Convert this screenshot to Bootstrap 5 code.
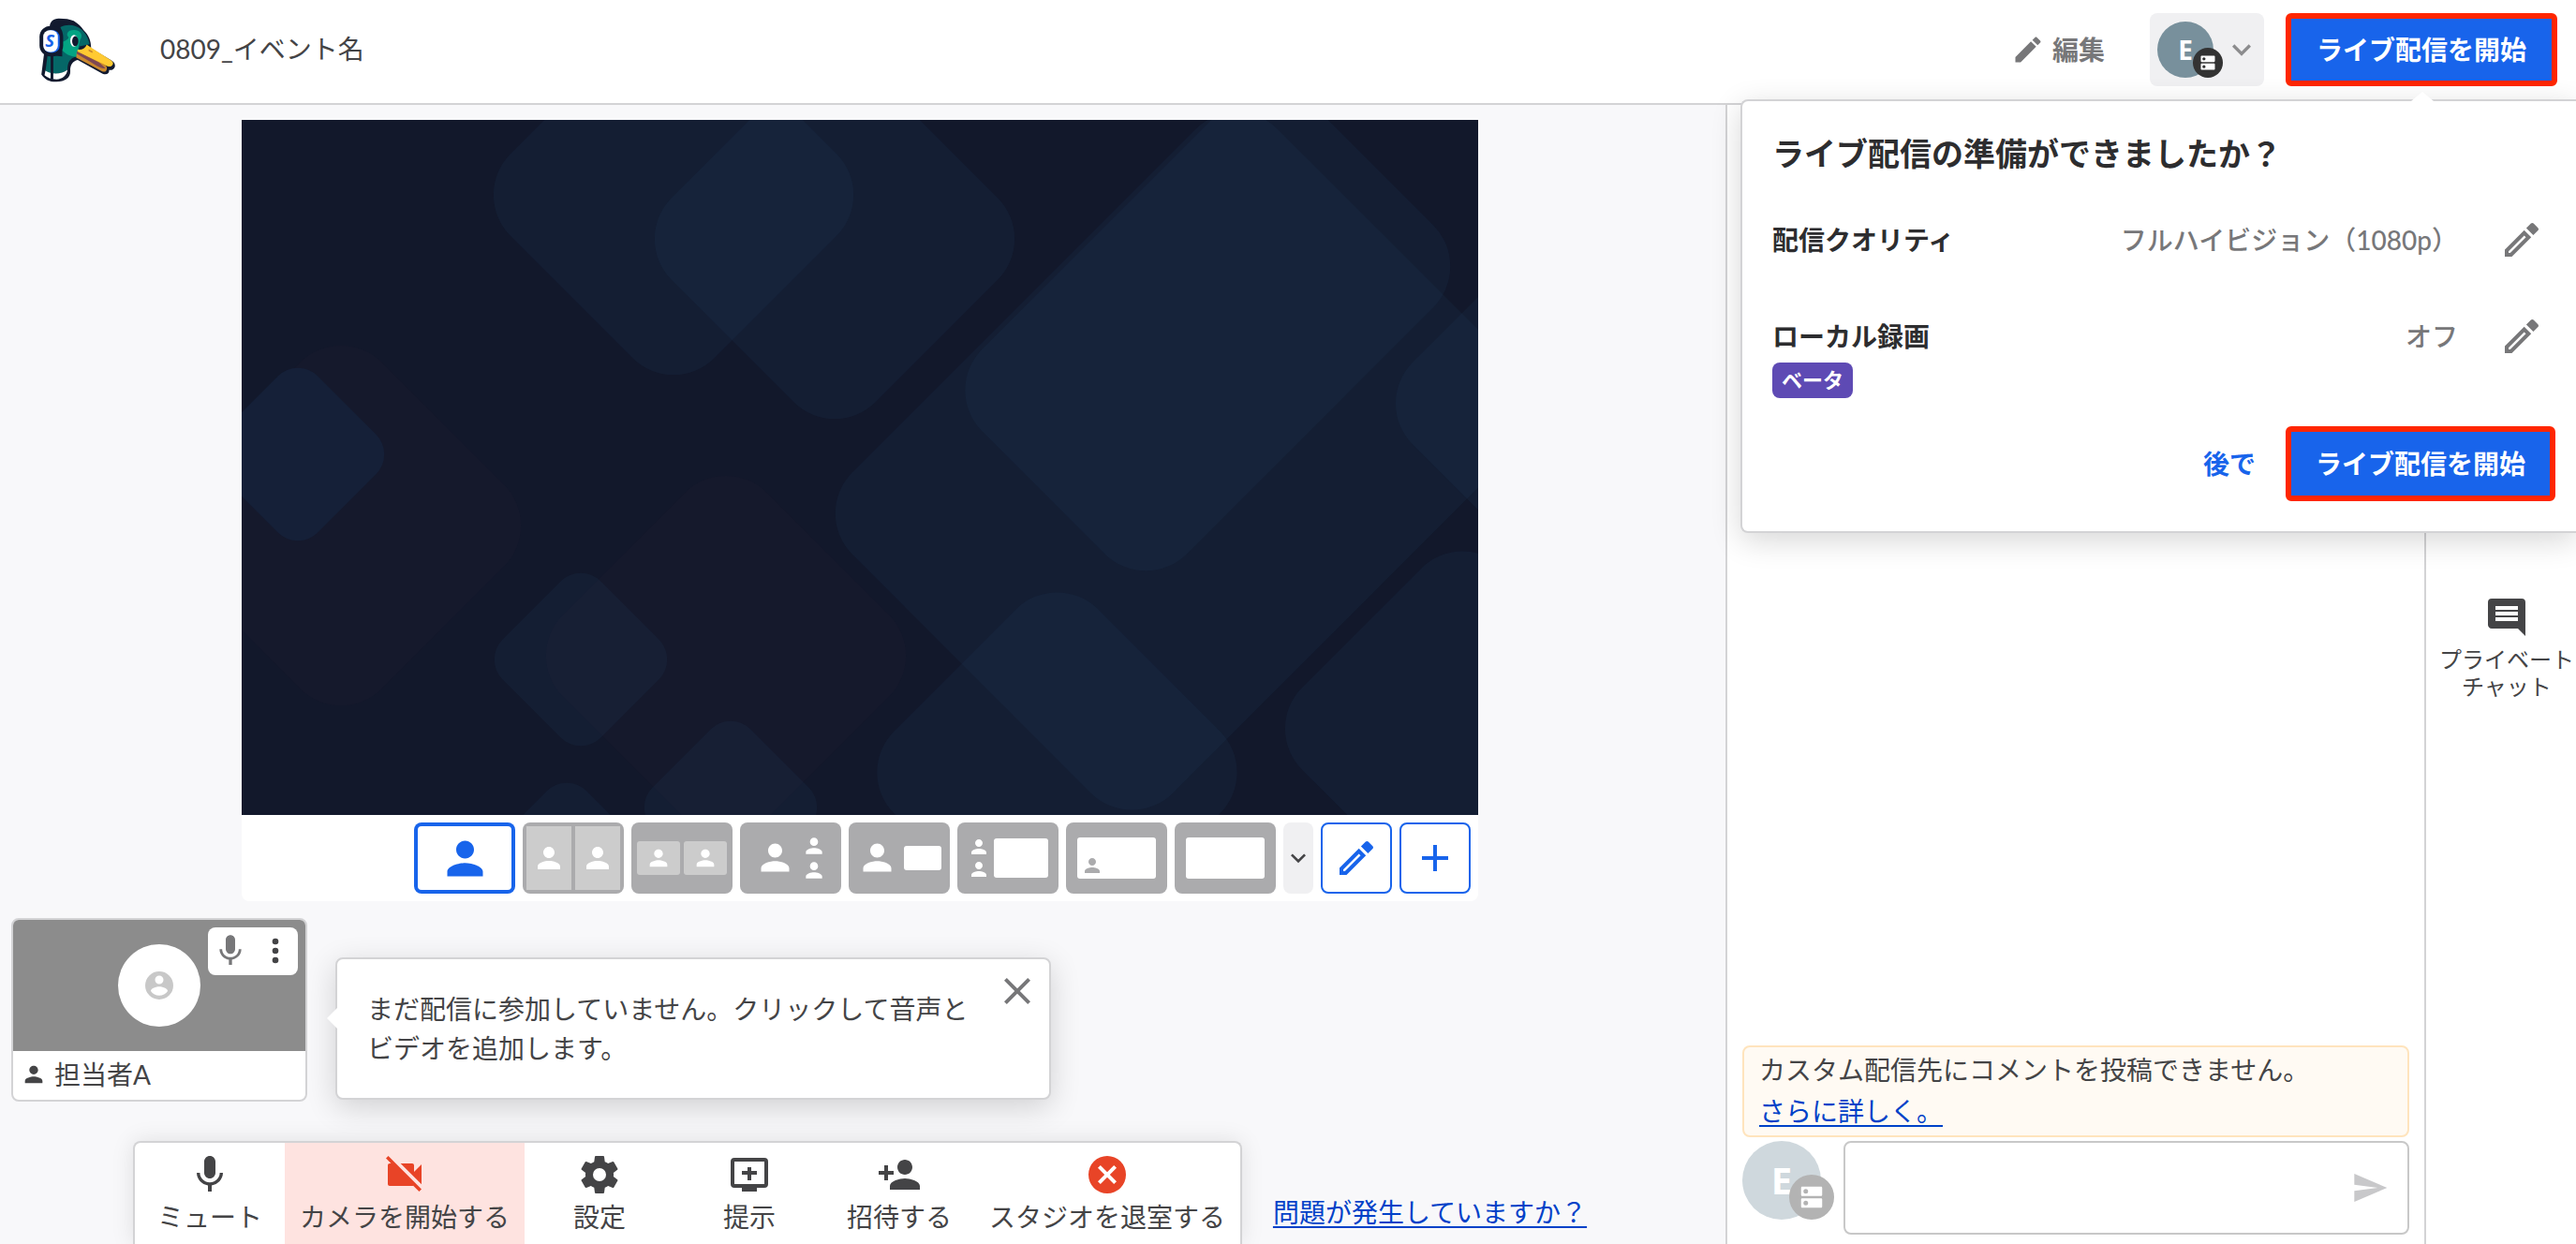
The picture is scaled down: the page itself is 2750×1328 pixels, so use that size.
<!DOCTYPE html>
<html lang="ja">
<head>
<meta charset="utf-8">
<meta name="viewport" content="width=device-width, initial-scale=1">
<title>0809_イベント名</title>
<link rel="stylesheet" href="https://cdn.jsdelivr.net/npm/bootstrap@5.3.0/dist/css/bootstrap.min.css">
<style>
:root{--ink:#444446;--muted:#777779;--blue:#1864eb;--line:#d3d3d5;--tile:#ababad}
body{font-family:Lato,"Noto Sans CJK JP",sans-serif;font-size:28px;line-height:42px;color:var(--ink);background:#f8f8fa}
svg{display:block;flex:none}
.i28{width:28px;height:28px}.i36{width:36px;height:36px}.i40{width:40px;height:40px}.i48{width:48px;height:48px}
.topbar{height:112px;border-bottom:2px solid var(--line);padding:0 20px 4px 42px;z-index:5}
.logo{width:82px;height:69px}
.event-name{margin-left:47px;font-size:28px;font-weight:400;line-height:42px;padding-bottom:3px}
.btn{font-size:28px;line-height:42px;font-weight:700;border-radius:8px}
.btn-plain{color:var(--muted);border:0}
.acct{background:#f0f0f2;border:0;height:78px;width:122px;padding:0 4px 0 8px;margin:0 23px 0 48px;gap:10px}
.avatar{flex:none;width:60px;height:60px;border-radius:50%;background:#78909c;color:#fff;font:700 28px/60px "Open Sans",sans-serif;text-align:center;position:relative}
.avatar .src{position:absolute;right:-10px;bottom:0;width:32px;height:32px;border-radius:50%;background:#333;display:flex;align-items:center;justify-content:center}
.avatar .src svg{width:20px;height:20px}
.avatar.big{width:84px;height:84px;background:#cfd8dd;font-size:40px;line-height:84px}
.avatar.big .src{right:-14px;width:48px;height:48px;background:#b3b3b3}
.avatar.big .src svg{width:30px;height:30px}
.btn-live{background:var(--blue);color:#fff;border:6px solid #ff2600;height:80px;padding:0 26px;border-radius:6px}
.btn-live:hover{background:#1256d0;color:#fff;border-color:#ff2600}
.topbar>.btn-live{height:78px;padding:0 27px}
.pop{position:absolute;top:106px;right:0;width:892px;background:#fff;border:2px solid var(--line);border-right:0;border-radius:8px 0 0 8px;padding:30px 22px 32px 32px;box-shadow:0 8px 32px rgba(0,0,0,.16);color:#2d2d2f}
.pop::before{content:"";position:absolute;right:152px;top:-10px;border:12px solid transparent;border-top:0;border-bottom:10px solid #fff}
.pop h2{font-size:34px;line-height:52px;font-weight:700;margin:0 0 42px}
.pop-row{height:48px;font-weight:700}
.pop-row~.pop-row{margin-top:55px}
.pop-row .btn{padding:0 12px;margin-left:32px}
.pop-value{color:var(--muted);font-weight:500}
.pop-actions{margin-top:30px}
.beta{background:#5e4ab4;color:#fff;font-size:22px;line-height:38px;font-weight:700;padding:0 10px;border-radius:8px}
.btn-later{color:var(--blue);padding:0;margin-right:32px;border:0}
.studio{padding:16px 6px 0 0}
.scene{max-width:1320px}
.scene>svg{width:100%;height:auto;aspect-ratio:1320/742}
.layouts{background:#fff;border-radius:0 0 8px 8px;padding:8px}
.layouts button{height:76px;border-radius:8px;border:0;padding:0;background:var(--tile);overflow:hidden;color:#fff;display:flex;align-items:center;justify-content:center}
.layouts .tile{width:108px}
.layouts .picked{background:#fff;color:var(--blue);box-shadow:inset 0 0 0 4px var(--blue)}
.layouts .more{width:32px;background:#f0f0f2;color:var(--ink)}
.layouts .tool{width:76px;background:#fff;color:var(--blue);border:2px solid var(--blue)}
.guests{padding:18px 12px 0}
.guest{width:316px;height:196px;background:#fff;border:2px solid var(--line);border-radius:8px;overflow:hidden}
.guest-view{height:140px;background:#8c8c8c}
.guest-face{width:88px;height:88px;background:#fff;color:#c8c8c8}
.guest-tools{position:absolute;top:8px;right:8px;background:#fff;border-radius:8px;padding:5px 4px 6px}
.guest-tools button,.hint button{border:0;background:none;padding:0}
.hint{width:764px;margin:42px 0 0 30px;background:#fff;border:2px solid var(--line);border-radius:8px;padding:32px 10px 32px 32px;box-shadow:0 8px 32px rgba(0,0,0,.16)}
.hint::before{content:"";position:absolute;left:-11px;top:52px;border:11px solid transparent;border-left:0;border-right-color:#fff}
.hint button{margin-top:-22px;color:var(--muted)}
.dock{height:110px;background:#fff;border:2px solid var(--line);border-bottom:0;border-radius:8px 8px 0 0;box-shadow:0 0 24px rgba(0,0,0,.10);overflow:hidden}
.dock button{border:0;background:none;color:var(--ink);min-width:160px;padding:10px 16px 0;white-space:nowrap}
.dock .off{background:#fee3e0}
.red{color:#e84427}
.text-link{color:#0041c8;text-decoration:underline;text-decoration-thickness:2px;text-underline-offset:4px}
.help{margin:0 0 13px 33px}
.chat{width:746px;background:#fff;border-left:2px solid var(--line);padding:0 16px 10px}
.notice{background:#fffaf3;border:2px solid #ffe4bd;border-radius:8px;padding:2px 16px 4px;line-height:44px;margin-bottom:4px}
.compose textarea{height:100px;border:2px solid #c8c8c8;border-radius:8px;resize:none;font-size:28px;background:#fff}
.compose .send{position:absolute;right:22px;top:30px;border:0;background:none;padding:0;color:#c8c8ca}
.rail{width:162px;background:#fff;border-left:2px solid var(--line);padding:523px 0 0 12px}
.rail a{font-size:24px;line-height:29px;color:var(--ink);white-space:nowrap}
.rail span{margin-top:6px}
</style>
<script src="https://cdn.jsdelivr.net/npm/bootstrap@5.3.0/dist/js/bootstrap.bundle.min.js"></script>
</head>
<body class="vh-100 overflow-hidden d-flex flex-column">
<svg class="d-none" fill="currentColor">
  <symbol id="person" viewBox="0 0 24 24"><path d="M12 12c2.2 0 4-1.8 4-4s-1.800-4-4-4-4 1.800-4 4 1.800 4 4 4zm0 2c-2.700 0-8 1.300-8 4v2h16v-2c0-2.700-5.300-4-8-4z"/></symbol>
  <symbol id="pencil" viewBox="0 0 24 24"><path d="M3 17.250V21h3.750L17.800 9.900l-3.750-3.750zM20.700 7.050c.4-.4.4-1 0-1.400l-2.350-2.350c-.4-.4-1-.4-1.400 0l-1.850 1.850 3.750 3.750z"/></symbol>
  <symbol id="pencil-line" viewBox="0 0 24 24"><path fill-rule="evenodd" d="M3 17.250V21h3.750L17.100 10.650 13.350 6.900zM5 18.100l8.350-8.350.9.900L5.900 19H5zM14.450 5.800l2.500-2.500c.4-.4 1-.4 1.400 0l2.350 2.350c.4.400.4 1 0 1.400l-2.500 2.500z"/></symbol>
  <symbol id="chev" viewBox="0 0 24 24"><path d="M7.400 8.600 12 13.200l4.600-4.600L18 10l-6 6-6-6z"/></symbol>
  <symbol id="server" viewBox="0 0 24 24"><path fill-rule="evenodd" d="M20 13H4c-.6 0-1 .4-1 1v6c0 .6.400 1 1 1h16c.6 0 1-.4 1-1v-6c0-.6-.4-1-1-1zM7 19a2 2 0 1 1 0-4 2 2 0 0 1 0 4zM20 3H4c-.6 0-1 .4-1 1v6c0 .6.400 1 1 1h16c.6 0 1-.4 1-1V4c0-.6-.4-1-1-1zM7 9a2 2 0 1 1 0-4 2 2 0 0 1 0 4z"/></symbol>
  <symbol id="mic" viewBox="0 0 24 24"><path d="M12 14c1.660 0 3-1.340 3-3V5c0-1.660-1.340-3-3-3S9 3.340 9 5v6c0 1.660 1.340 3 3 3zM17.300 11c0 3-2.540 5.100-5.300 5.100S6.700 14 6.700 11H5c0 3.410 2.720 6.230 6 6.720V21h2v-3.280c3.280-.48 6-3.300 6-6.720z"/></symbol>
  <symbol id="dots" viewBox="0 0 24 24"><circle cx="12" cy="6" r="2"/><circle cx="12" cy="12" r="2"/><circle cx="12" cy="18" r="2"/></symbol>
  <symbol id="face" viewBox="0 0 24 24"><path d="M12 2a10 10 0 1 0 0 20 10 10 0 0 0 0-20zm0 3a3 3 0 1 1 0 6 3 3 0 0 1 0-6zm0 14.200a7.200 7.200 0 0 1-6-3.220c.03-2 4-3.080 6-3.080s5.970 1.090 6 3.080a7.200 7.200 0 0 1-6 3.220z"/></symbol>
  <symbol id="close" viewBox="0 0 24 24"><path d="M19 6.400 17.600 5 12 10.600 6.400 5 5 6.400l5.600 5.600L5 17.600 6.400 19l5.600-5.600 5.600 5.600 1.400-1.400-5.600-5.600z"/></symbol>
  <symbol id="plus" viewBox="0 0 24 24"><path d="M19 13h-6v6h-2v-6H5v-2h6V5h2v6h6z"/></symbol>
  <symbol id="cam-off" viewBox="0 0 24 24"><path d="M21 6.500l-4 4V7c0-.55-.45-1-1-1H9.820L21 17.180zM3.270 2 2 3.270 4.730 6H4c-.55 0-1 .45-1 1v10c0 .55.450 1 1 1h12c.21 0 .39-.08.54-.18L19.730 21 21 19.730z"/></symbol>
  <symbol id="gear" viewBox="0 0 24 24"><path d="M19.430 12.980c.04-.32.070-.64.070-.98s-.03-.66-.07-.98l2.110-1.650c.19-.15.240-.42.120-.64l-2-3.460c-.12-.22-.39-.3-.61-.22l-2.490 1c-.52-.4-1.080-.73-1.690-.98l-.38-2.650A.49.490 0 0 0 14 2h-4c-.25 0-.46.180-.49.420l-.38 2.650c-.61.250-1.170.59-1.690.98l-2.490-1c-.23-.09-.49 0-.61.220l-2 3.460c-.13.220-.07.490.12.640l2.110 1.650c-.04.320-.07.650-.07.980s.03.660.07.980l-2.110 1.650c-.19.150-.24.420-.12.640l2 3.460c.12.220.39.300.61.220l2.490-1c.52.400 1.080.730 1.690.980l.38 2.650c.03.240.24.420.49.420h4c.25 0 .46-.18.490-.42l.38-2.650c.61-.25 1.170-.59 1.690-.98l2.490 1c.23.090.49 0 .61-.22l2-3.460c.12-.22.070-.49-.12-.64zM12 15.500a3.500 3.500 0 1 1 0-7 3.500 3.500 0 0 1 0 7z"/></symbol>
  <symbol id="present" viewBox="0 0 24 24"><path fill-rule="evenodd" d="M20 3H4a2 2 0 0 0-2 2v12a2 2 0 0 0 2 2h4v2h8v-2h4a2 2 0 0 0 2-2V5a2 2 0 0 0-2-2zm0 14H4V5h16zM11 8h2v2h3v2h-3v3h-2v-3H8v-2h3z"/></symbol>
  <symbol id="invite" viewBox="0 0 24 24"><path d="M15 12c2.210 0 4-1.790 4-4s-1.790-4-4-4-4 1.790-4 4 1.790 4 4 4zm-9-2V7H4v3H1v2h3v3h2v-3h3v-2zm9 4c-2.670 0-8 1.340-8 4v2h16v-2c0-2.660-5.330-4-8-4z"/></symbol>
  <symbol id="leave" viewBox="0 0 24 24"><path d="M12 2a10 10 0 1 0 0 20 10 10 0 0 0 0-20zm5 13.590L15.590 17 12 13.410 8.410 17 7 15.590 10.590 12 7 8.410 8.410 7 12 10.590 15.590 7 17 8.410 13.410 12z"/></symbol>
  <symbol id="send" viewBox="0 0 24 24"><path d="M2 21 23 12 2 3v7l15 2-15 2z"/></symbol>
  <symbol id="comment" viewBox="0 0 24 24"><path d="M22 4a2 2 0 0 0-2-2H4a2 2 0 0 0-2 2v12c0 1.100.9 2 2 2h14l4 4zM18 14H6v-2h12zm0-3H6V9h12zm0-3H6V6h12z"/></symbol>
</svg>

<header class="topbar bg-white d-flex align-items-center position-relative flex-shrink-0">
  <a href="#" aria-label="ホーム">
    <svg class="logo" viewBox="126 58 246 208">
      <path d="M141 170 132 240C142 256 160 265 181 264c26-1 45-12 44-34-1-20 8-32 24-36l80 44c14 5 22-2 21-12 12 2 22-7 18-19-2-6-6-9-13-13l-63-38c0-24-8-43-24-58-8-11-16-20-32-30-12-6-28-8-48-8-18 0-30 12-29 27z" fill="#121a2f"/>
      <path d="M152 178 145 230c18 12 54 10 71-5 0-20 6-32 18-38l14-7 7-30 32-7c-3-18-13-36-26-47-18-16-46-20-68-8l6 14v80z" fill="#056767"/>
      <path d="M201 135c9-4 17-8 19-14-11-9-4-26 20-24 20 2 26 18 17 31l-9 38-3 18c-19-1-39-11-46-23z" fill="#03a483"/>
      <path d="M145 228c20 13 52 12 71-3-3 19-15 29-36 31-16 0-29-5-38-13z" fill="#fff"/>
      <path d="M166 174v82" stroke="#121a2f" stroke-width="9"/>
      <path d="M249 160c10 3 24-2 29-15l75 48c10 7 12 11 7 18-3 4-8 5-15 3l-99-40z" fill="#ffca32"/>
      <path d="M246 166l88 42c7 5 11 10 8 17-3 8-9 8-17 4l-81-43z" fill="#ca882d"/>
      <path d="M246 166l72 36 21 19c-20 0-36-13-52-23l-41-24z" fill="#7e4853"/>
      <path d="M284 159l13 7-1 5-12-6z" fill="#ca882d"/>
      <ellipse cx="237" cy="132" rx="12" ry="19" fill="#fff"/><ellipse cx="241" cy="133" rx="10" ry="16" fill="#121a2f"/>
      <rect x="126" y="84" width="76" height="98" rx="35" fill="#121a2f"/>
      <rect x="139" y="98" width="52" height="72" rx="22" fill="#1864eb"/>
      <rect x="138" y="98" width="47" height="70" rx="21" fill="#fff"/>
      <text x="144" y="152" font-family="Open Sans, sans-serif" font-weight="700" font-style="italic" font-size="56" fill="#1864eb">S</text>
    </svg>
  </a>
  <h1 class="event-name mb-0 me-auto">0809_イベント名</h1>
  <button class="btn btn-plain d-flex align-items-center p-0"><svg class="i36 me-2" fill="currentColor"><use href="#pencil"/></svg>編集</button>
  <button class="btn acct d-flex align-items-center" aria-label="配信先">
    <span class="avatar">E<span class="src"><svg fill="#fff"><use href="#server"/></svg></span></span>
    <svg class="i40" fill="#8c8c8e"><use href="#chev"/></svg>
  </button>
  <button class="btn btn-live">ライブ配信を開始</button>

  <section class="pop">
    <h2>ライブ配信の準備ができましたか？</h2>
    <div class="pop-row d-flex align-items-center"><span class="me-auto">配信クオリティ</span><span class="pop-value">フルハイビジョン（1080p）</span><button class="btn btn-plain" aria-label="配信クオリティを編集"><svg class="i48" fill="currentColor"><use href="#pencil-line"/></svg></button></div>
    <div class="pop-row d-flex align-items-center"><span class="me-auto">ローカル録画</span><span class="pop-value">オフ</span><button class="btn btn-plain" aria-label="ローカル録画を編集"><svg class="i48" fill="currentColor"><use href="#pencil-line"/></svg></button></div>
    <div class="d-flex mt-1"><span class="beta">ベータ</span></div>
    <div class="d-flex justify-content-end align-items-center pop-actions"><button class="btn btn-later">後で</button><button class="btn btn-live">ライブ配信を開始</button></div>
  </section>
</header>

<div class="d-flex flex-grow-1 overflow-hidden">
  <main class="studio flex-grow-1 d-flex flex-column">
    <div class="scene w-100 mx-auto">
      <svg viewBox="0 0 1320 742">
        <rect width="1320" height="742" fill="#12182b"/>
        <g fill="#3a2a3a" fill-opacity=".08">
          <rect x="-48" y="279" width="308" height="308" rx="62" transform="rotate(45 106 433)"/>
          <rect x="363" y="418" width="308" height="308" rx="62" transform="rotate(45 517 572)"/>
        </g>
        <g fill="#234469" fill-opacity=".14" transform="rotate(45)">
          <rect x="727" y="-775" width="484" height="642" rx="62"/>
          <rect x="732" y="-820" width="309" height="496" rx="62"/>
          <rect x="1067" y="-947" width="308" height="308" rx="62"/>
          <rect x="954" y="-277" width="308" height="308" rx="62"/>
          <rect x="1229" y="-614" width="308" height="304" rx="62"/>
        </g>
        <g fill="#234469" fill-opacity=".14">
          <rect x="307" y="-74" width="308" height="308" rx="62" transform="rotate(45 461 80)"/>
          <rect x="479" y="-27" width="308" height="308" rx="62" transform="rotate(45 633 127)"/>
          <rect x="288" y="502" width="148" height="148" rx="30" transform="rotate(45 362 576)"/>
          <rect x="448" y="660" width="148" height="148" rx="30" transform="rotate(45 522 734)"/>
          <rect x="273" y="726" width="148" height="148" rx="30" transform="rotate(45 347 800)"/>
        </g>
        <rect x="-14" y="283" width="148" height="148" rx="30" transform="rotate(45 60 357)" fill="#152038"/>
      </svg>
      <div class="layouts d-flex justify-content-end gap-2">
        <button class="tile picked" aria-label="ソロ"><svg width="57" height="57" fill="currentColor"><use href="#person"/></svg></button>
        <button class="tile" aria-label="切り抜き"><svg width="108" height="76"><path fill="#ccc" d="M4 4h48v68H4zM56 4h48v68H56z"/><use href="#person" fill="#fff" x="10" y="20" width="36" height="36"/><use href="#person" fill="#fff" x="62" y="20" width="36" height="36"/></svg></button>
        <button class="tile" aria-label="グループ"><svg width="108" height="76"><g fill="#ccc"><rect x="6" y="20" width="46" height="36" rx="3"/><rect x="56" y="20" width="46" height="36" rx="3"/></g><use href="#person" fill="#fff" x="15" y="24" width="28" height="28"/><use href="#person" fill="#fff" x="65" y="24" width="28" height="28"/></svg></button>
        <button class="tile" aria-label="スポットライト"><svg width="108" height="76" fill="#fff"><use href="#person" x="15" y="15" width="45" height="45"/><use href="#person" x="66" y="12" width="26" height="26"/><use href="#person" x="66" y="38" width="26" height="26"/></svg></button>
        <button class="tile" aria-label="ニュース"><svg width="108" height="76" fill="#fff"><use href="#person" x="8" y="15" width="45" height="45"/><rect x="59" y="25" width="40" height="26" rx="3"/></svg></button>
        <button class="tile" aria-label="画面共有"><svg width="108" height="76" fill="#fff"><use href="#person" x="11" y="14" width="24" height="24"/><use href="#person" x="11" y="38" width="24" height="24"/><rect x="39" y="17" width="58" height="42" rx="3"/></svg></button>
        <button class="tile" aria-label="小窓"><svg width="108" height="76" fill="#fff"><rect x="12" y="16" width="84" height="44" rx="3"/><use href="#person" fill="#ababad" x="16" y="34" width="24" height="24"/></svg></button>
        <button class="tile" aria-label="全画面"><svg width="108" height="76" fill="#fff"><rect x="12" y="16" width="84" height="44" rx="3"/></svg></button>
        <button class="more" aria-label="その他"><svg width="32" height="32" fill="currentColor"><use href="#chev"/></svg></button>
        <button class="tool" aria-label="レイアウトを編集"><svg class="i48" fill="currentColor"><use href="#pencil-line"/></svg></button>
        <button class="tool" aria-label="レイアウトを追加"><svg class="i48" fill="currentColor"><use href="#plus"/></svg></button>
      </div>
    </div>

    <div class="guests d-flex align-items-start">
      <article class="guest">
        <div class="guest-view position-relative d-flex align-items-center justify-content-center">
          <div class="guest-face rounded-circle d-flex align-items-center justify-content-center"><svg class="i36" fill="currentColor"><use href="#face"/></svg></div>
          <div class="guest-tools d-flex gap-2"><button aria-label="ミュート"><svg class="i40" fill="#777779"><use href="#mic"/></svg></button><button aria-label="メニュー"><svg class="i40" fill="#444446"><use href="#dots"/></svg></button></div>
        </div>
        <div class="d-flex align-items-center pt-1 ps-2"><svg class="i28 me-2" fill="currentColor"><use href="#person"/></svg>担当者A</div>
      </article>
      <div class="hint d-flex position-relative">
        <div>まだ配信に参加していません。クリックして音声と<br>ビデオを追加します。</div>
        <button class="ms-auto align-self-start" aria-label="閉じる"><svg class="i48" fill="currentColor"><use href="#close"/></svg></button>
      </div>
    </div>

    <footer class="mt-auto d-flex justify-content-center align-items-end">
      <nav class="dock d-flex">
        <button class="d-flex flex-column align-items-center"><svg class="i48" fill="currentColor"><use href="#mic"/></svg>ミュート</button>
        <button class="off d-flex flex-column align-items-center"><svg class="i48 red" fill="currentColor"><use href="#cam-off"/></svg>カメラを開始する</button>
        <button class="d-flex flex-column align-items-center"><svg class="i48" fill="currentColor"><use href="#gear"/></svg>設定</button>
        <button class="d-flex flex-column align-items-center"><svg class="i48" fill="currentColor"><use href="#present"/></svg>提示</button>
        <button class="d-flex flex-column align-items-center"><svg class="i48" fill="currentColor"><use href="#invite"/></svg>招待する</button>
        <button class="d-flex flex-column align-items-center"><svg class="i48 red" fill="currentColor"><use href="#leave"/></svg>スタジオを退室する</button>
      </nav>
      <a class="text-link help" href="#">問題が発生していますか？</a>
    </footer>
  </main>

  <aside class="chat flex-shrink-0 d-flex flex-column justify-content-end">
    <div class="notice">カスタム配信先にコメントを投稿できません。<br><a class="text-link" href="#">さらに詳しく。</a></div>
    <form class="compose d-flex position-relative">
      <div class="avatar big me-4 flex-shrink-0">E<span class="src"><svg fill="#fff"><use href="#server"/></svg></span></div>
      <textarea class="form-control" aria-label="コメント"></textarea>
      <button type="button" class="send" aria-label="送信"><svg class="i40" fill="currentColor"><use href="#send"/></svg></button>
    </form>
  </aside>

  <nav class="rail flex-shrink-0">
    <a href="#" class="d-flex flex-column align-items-center text-decoration-none text-center"><svg class="i48" fill="currentColor"><use href="#comment"/></svg><span>プライベート<br>チャット</span></a>
  </nav>
</div>
</body>
</html>
